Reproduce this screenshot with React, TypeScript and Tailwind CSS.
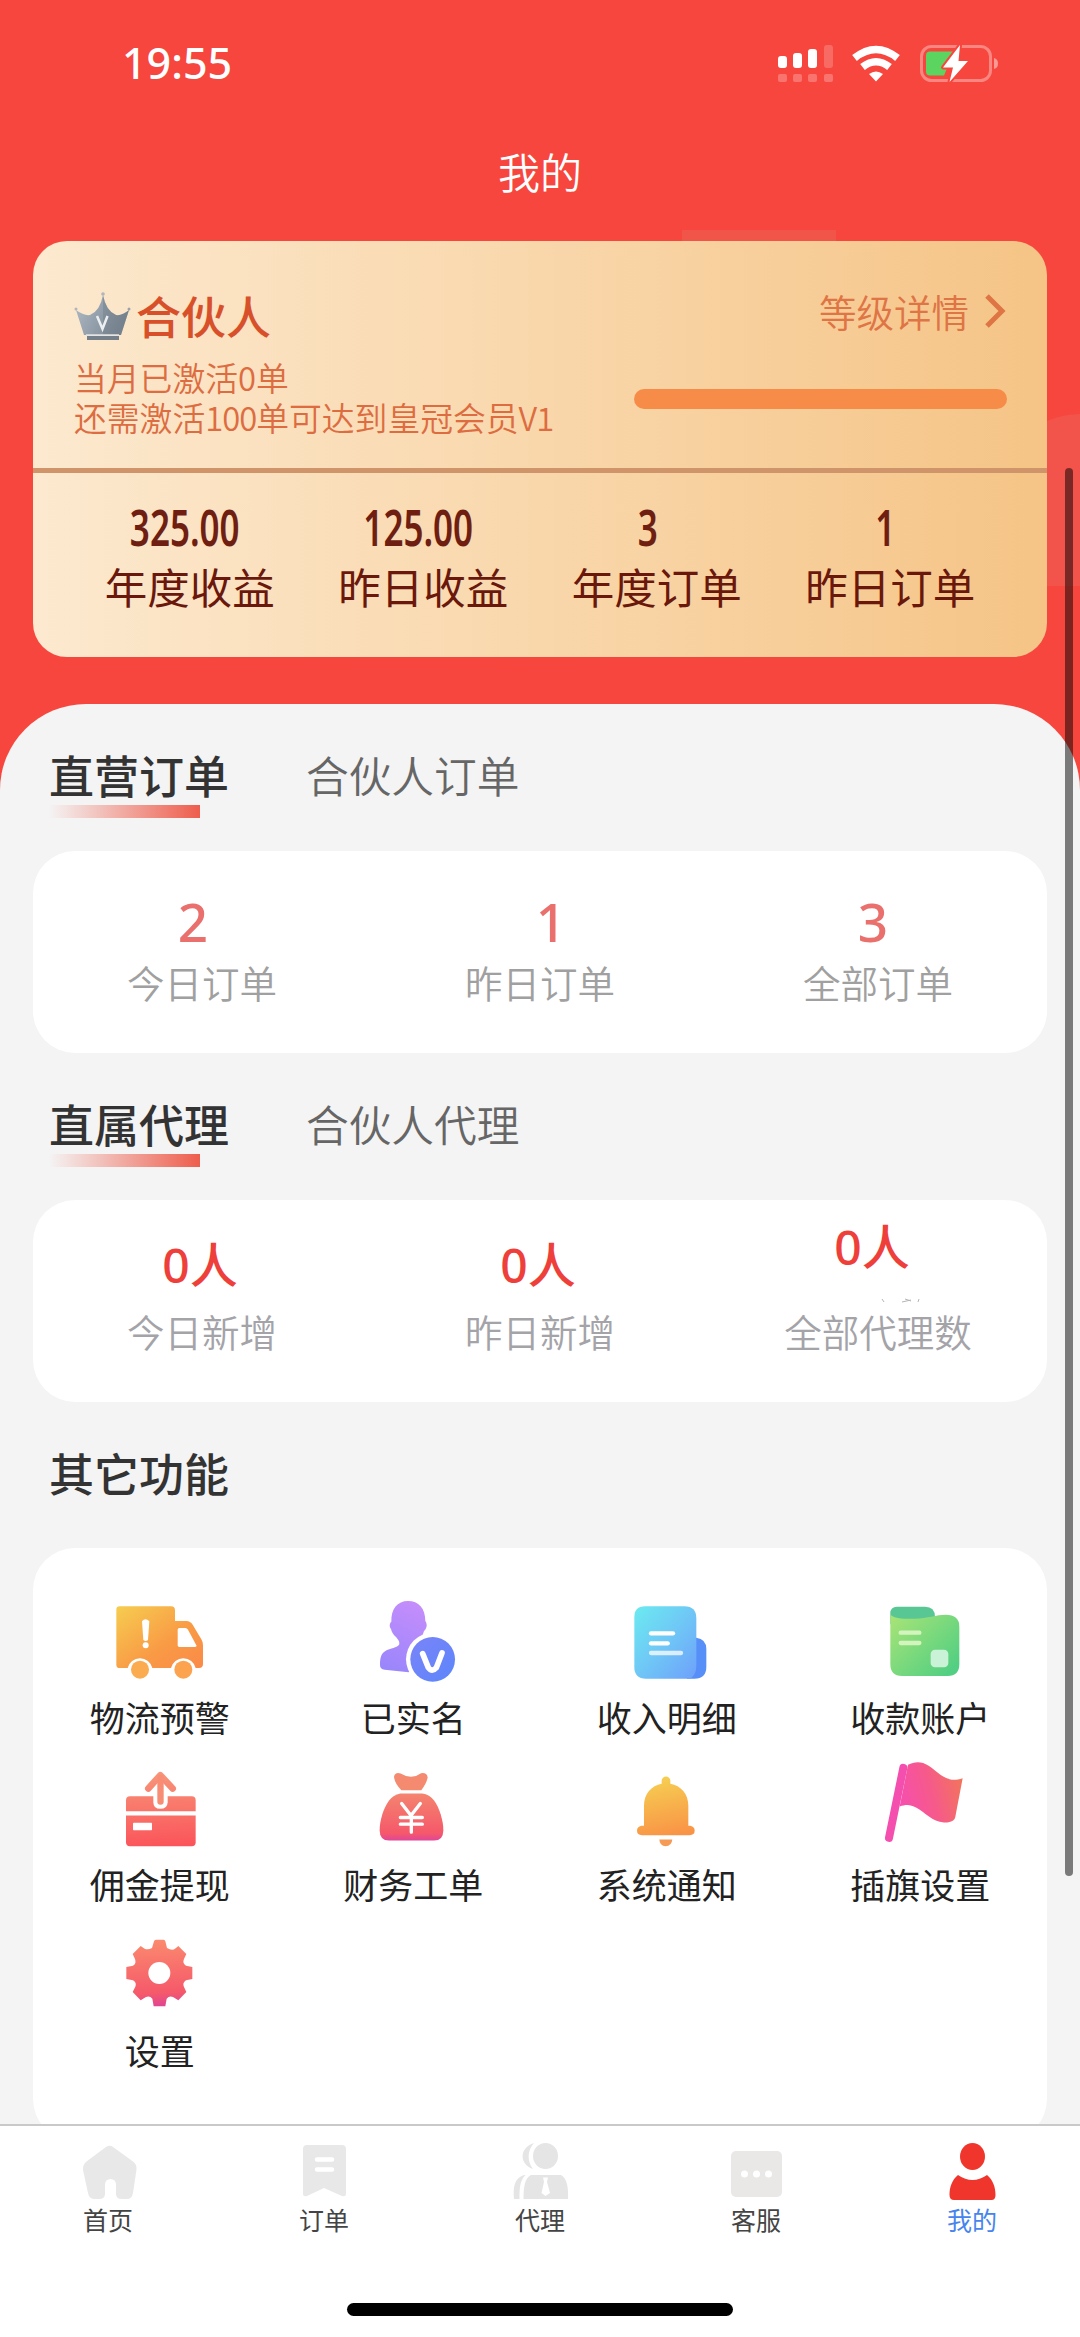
import type { ReactNode } from 'react'

const cardStats = [
  { value: '325.00', label: '年度收益', shift: 'pr-[10px]' },
  { value: '125.00', label: '昨日收益', shift: 'pr-[11px]' },
  { value: '3', label: '年度订单', shift: 'pr-[18px]' },
  { value: '1', label: '昨日订单', shift: 'pr-[11px]' },
]

const orderStats = [
  { value: '2', label: '今日订单', shift: 'pr-[18px]' },
  { value: '1', label: '昨日订单', shift: 'pl-[22px]' },
  { value: '3', label: '全部订单', shift: 'pr-[10px]' },
]

const agentStats = [
  { value: '0人', label: '今日新增', shift: 'pr-[4px] pt-[18px]' },
  { value: '0人', label: '昨日新增', shift: 'pr-[4px] pt-[18px]' },
  { value: '0人', label: '全部代理数', shift: 'pr-[12px]' },
]

const TruckIcon = () => (
  <svg viewBox="149 42 300 300" className="size-[100px]">
    <defs>
      <linearGradient id="truck" x1="0" y1="0" x2="1" y2="1">
        <stop offset="0" stopColor="#f6cd50" />
        <stop offset="0.6" stopColor="#f99a45" />
        <stop offset="1" stopColor="#fa8a48" />
      </linearGradient>
    </defs>
    <path
      d="M178 82h154q12 0 12 12v32h34q12 0 19 11l26 44q5 8 5 18v56q0 12-12 12h-10a38 38 0 0 0-74 0h-56a38 38 0 0 0-74 0h-24q-10 0-10-10V92q0-10 10-10z"
      fill="url(#truck)"
    />
    <path d="M357 147h18q5 0 8 5l25 47q2 5-4 5h-47q-5 0-5-5v-47q0-5 5-5z" fill="#fff" />
    <path d="M245 127q10-12 22 0l-4 56q-7 6-14 0z" fill="#fff" />
    <circle cx="256" cy="199" r="9" fill="#fff" />
    <circle cx="239" cy="272" r="27" fill="#fbab50" />
    <circle cx="369" cy="272" r="27" fill="#fba34e" />
  </svg>
)

const VerifiedIcon = () => (
  <svg viewBox="910 42 300 300" className="size-[100px]">
    <defs>
      <linearGradient id="person" x1="0.6" y1="0" x2="0.3" y2="1">
        <stop offset="0" stopColor="#c48dfb" />
        <stop offset="1" stopColor="#9a86fb" />
      </linearGradient>
      <linearGradient id="badge" x1="0" y1="0" x2="1" y2="1">
        <stop offset="0" stopColor="#7b83f8" />
        <stop offset="1" stopColor="#5d86fb" />
      </linearGradient>
    </defs>
    <path
      d="M1045 66c32 0 52 22 52 60 8 12 3 24-4 30-4 16-12 27-22 38v40l-24 46-72-8q-14-1-14-14c0-30 8-41 28-47 18-6 30-8 30-18 0-8-4-11-10-19-8-7-13-14-15-24-6-8-4-18 1-22-1-38 18-62 50-62z"
      fill="url(#person)"
    />
    <circle cx="1119" cy="241" r="80" fill="#fff" />
    <circle cx="1119" cy="241" r="67" fill="url(#badge)" />
    <path d="M1089 224l17 42q11 15 24 0l17-44" fill="none" stroke="#fff" strokeWidth="17" strokeLinecap="round" strokeLinejoin="round" />
  </svg>
)

const IncomeIcon = () => (
  <svg viewBox="170 42 300 300" className="size-[100px]">
    <defs>
      <linearGradient id="income" x1="0" y1="0" x2="1" y2="1">
        <stop offset="0" stopColor="#6bebf0" />
        <stop offset="0.5" stopColor="#6fc7f6" />
        <stop offset="1" stopColor="#6ea0fb" />
      </linearGradient>
    </defs>
    <path d="M380 176h28q30 4 30 34v53q0 36-36 36h-22z" fill="#578ff9" />
    <path d="M254 82h118q36 0 36 36v140q0 30-18 41H257q-35 0-35-35V114q0-32 32-32z" fill="url(#income)" />
    <g stroke="#fff" strokeWidth="13" strokeLinecap="round">
      <path d="M272 163h66" />
      <path d="M272 193h50" />
      <path d="M272 222h90" opacity="0.75" />
    </g>
  </svg>
)

const AccountIcon = () => (
  <svg viewBox="931 42 300 300" className="size-[100px]">
    <defs>
      <linearGradient id="account" x1="0" y1="0.1" x2="0.9" y2="0.9">
        <stop offset="0" stopColor="#a5e377" />
        <stop offset="1" stopColor="#52cf82" />
      </linearGradient>
    </defs>
    <path d="M1012 83h84q30 0 30 31l-10 22H992v-33q0-20 20-20z" fill="#59c793" />
    <path
      d="M992 107c12 12 44 13 74 12 38-1 64-12 92-12q41 0 41 36v113q0 35-35 35h-137q-35 0-35-35z"
      fill="url(#account)"
    />
    <g stroke="#d3f5bd" strokeWidth="13" strokeLinecap="round">
      <path d="M1023 161h56" />
      <path d="M1023 192h56" />
    </g>
    <rect x="1113" y="212" width="53" height="53" rx="13" fill="#c9f2d6" />
  </svg>
)

const WithdrawIcon = () => (
  <svg viewBox="149 541.5 300 300" className="size-[100px]">
    <defs>
      <linearGradient id="withdraw" gradientUnits="userSpaceOnUse" x1="300" y1="575" x2="310" y2="800">
        <stop offset="0" stopColor="#f7977a" />
        <stop offset="1" stopColor="#fb545a" />
      </linearGradient>
    </defs>
    <path d="M209 650h185q12 0 12 12v33H197v-33q0-12 12-12z" fill="url(#withdraw)" />
    <path d="M197 708h209v80q0 12-12 12H209q-12 0-12-12z" fill="url(#withdraw)" />
    <path d="M279 640v28q0 20 21 20t22-20v-28z" fill="#fff" />
    <path d="M264 627l36-40 37 40" fill="none" stroke="url(#withdraw)" strokeWidth="20" strokeLinecap="round" strokeLinejoin="round" />
    <rect x="291" y="585" width="19" height="91" rx="9" fill="#f88d75" />
    <rect x="218" y="730" width="57" height="22" rx="2" fill="#fff" />
  </svg>
)

const MoneyBagIcon = () => (
  <svg viewBox="910 541.5 300 300" className="size-[100px]">
    <defs>
      <linearGradient id="bag" x1="0" y1="0" x2="0" y2="1">
        <stop offset="0" stopColor="#f4846f" />
        <stop offset="0.85" stopColor="#f5586a" />
        <stop offset="1" stopColor="#e0459a" />
      </linearGradient>
    </defs>
    <path d="M1003 592q3-15 20-10 16 10 31 10t30-11q17-3 20 12-2 16-19 39h-60q-20-20-22-40z" fill="#f48b70" />
    <path d="M1022 642h66c30 4 44 30 55 62 6 20 8 34 8 48q0 31-28 31H988q-28 0-28-31c0-14 2-28 8-48 11-32 25-56 54-62z" fill="url(#bag)" />
    <path d="M1026 672l28 36 28-36M1055 708v50M1022 714h66M1022 734h66" fill="none" stroke="#fff" strokeWidth="10" strokeLinecap="round" />
  </svg>
)

const BellIcon = () => (
  <svg viewBox="170 541.5 300 300" className="size-[100px]">
    <defs>
      <linearGradient id="bell" x1="0.4" y1="0" x2="0.6" y2="1">
        <stop offset="0" stopColor="#f6cf52" />
        <stop offset="1" stopColor="#f99446" />
      </linearGradient>
    </defs>
    <path
      d="M304 602q3-11 13-11t13 11v11c32 6 54 30 54 66v60h6q13 3 13 14 0 14-15 14H245q-15 0-15-14 0-11 13-14h8v-60c0-36 22-60 53-66z"
      fill="url(#bell)"
    />
    <path d="M297 780h39q-2 20-20 20t-19-20z" fill="#f59b55" />
  </svg>
)

const FlagIcon = () => (
  <svg viewBox="931 541.5 300 300" className="size-[100px]">
    <defs>
      <linearGradient id="flag" x1="0" y1="0.6" x2="1" y2="0.35">
        <stop offset="0" stopColor="#f64fae" />
        <stop offset="0.5" stopColor="#f65a8a" />
        <stop offset="1" stopColor="#f2745c" />
      </linearGradient>
    </defs>
    <path d="M1031 565l-43 210" stroke="#f44fae" strokeWidth="24" strokeLinecap="round" />
    <path
      d="M1045 556c20-10 40-12 62 3 34 22 52 54 102 37l-22 116c-2 14-20 18-34 17-36-2-56-30-84-45-16-9-30-10-49-3z"
      fill="url(#flag)"
    />
  </svg>
)

const GearIcon = () => (
  <svg viewBox="329 81 300 300" className="size-[100px]">
    <defs>
      <linearGradient id="gear" gradientUnits="userSpaceOnUse" x1="470" y1="120" x2="480" y2="322">
        <stop offset="0" stopColor="#fb8b6e" />
        <stop offset="0.8" stopColor="#f5596a" />
        <stop offset="1" stopColor="#e04593" />
      </linearGradient>
    </defs>
    <path
      d="M462 122h28q4 0 5 5l5 20q16 9 24 2l10-8 24 24-7 15q-6 12 6 20l19 4v36l-19 4q-12 8-6 20l7 15-24 25-16-10q-12-4-19 5l-4 23h-35l-4-23q-7-9-19-5l-16 10-24-25 8-16q5-12-7-19l-20-4v-36l20-4q11-6 6-20l-7-15 24-24 12 8q10 4 22-2l6-20q1-5 6-5z"
      fill="url(#gear)"
    />
    <circle cx="477" cy="222" r="33" fill="#fff" />
  </svg>
)

const features: { label: string; icon: ReactNode }[] = [
  { label: '物流预警', icon: <TruckIcon /> },
  { label: '已实名', icon: <VerifiedIcon /> },
  { label: '收入明细', icon: <IncomeIcon /> },
  { label: '收款账户', icon: <AccountIcon /> },
  { label: '佣金提现', icon: <WithdrawIcon /> },
  { label: '财务工单', icon: <MoneyBagIcon /> },
  { label: '系统通知', icon: <BellIcon /> },
  { label: '插旗设置', icon: <FlagIcon /> },
  { label: '设置', icon: <GearIcon /> },
]

const tabs: { label: string; icon: ReactNode; active?: boolean }[] = [
  {
    label: '首页',
    icon: (
      <path d="M28 3q4-2.500 7 0l20 14.500q4 3 3.500 8L55 49q-1 6-6 6h-5q-6 0-6-5v-9q0-6-5.500-6T27 41v9q0 5-6 5h-4q-6 0-7-6L5 26q-.5-5.500 3.500-8.500z" fill="#e8e8e8" />
    ),
  },
  {
    label: '订单',
    icon: (
      <>
        <path d="M13 1h35q4 0 4 4v45q0 3-4 2L30 44 13 52q-4 1-4-2V5q0-4 4-4z" fill="#e8e8e8" />
        <path d="M23 15.500h15M23 25.500h15" stroke="#fff" strokeWidth="4.500" strokeLinecap="round" />
      </>
    ),
  },
  {
    label: '代理',
    icon: (
      <>
        <ellipse cx="35.500" cy="12" rx="12.500" ry="13" fill="#e5e5e5" />
        <path d="M24-1c-15 5-15 21-1 26-6-8-6-18 1-26z" fill="#e5e5e5" />
        <path d="M21 31h30c6 3 7.500 13 7 24H13.500c0-11 1-21 7.500-24z" fill="#e5e5e5" />
        <path d="M14 31c-10 3-11 13-10 24h5.500c0-10 0-18 6-24z" fill="#e5e5e5" />
        <path d="M33 33.500h5L37 38l3 11-4.500 3-4-3 2.500-11z" fill="#fff" />
      </>
    ),
  },
  {
    label: '客服',
    icon: (
      <>
        <rect x="5" y="7" width="51" height="46" rx="5" fill="#e9e8e7" />
        <circle cx="18.500" cy="30" r="3.500" fill="#fff" />
        <circle cx="30.500" cy="30" r="3.500" fill="#fff" />
        <circle cx="42.500" cy="30" r="3.500" fill="#fff" />
      </>
    ),
  },
  {
    label: '我的',
    active: true,
    icon: (
      <>
        <ellipse cx="30.500" cy="12.500" rx="12.500" ry="13.500" fill="#f0352c" />
        <path d="M16 31q14.500 10 29 0c6 5 8.500 12 8.500 20q0 5-4 5H12q-4.500 0-4.500-5c0-8 2.500-15 8.500-20z" fill="#f0352c" />
      </>
    ),
  },
]

const StatusBar = () => (
  <div className="flex h-[126px] items-start justify-between pl-[122px] pr-[80px] text-white">
    <span className="mt-[33px] text-[43px] leading-[60px] font-medium [font-family:'Noto_Sans',sans-serif]">19:55</span>
    <svg viewBox="776 40 224 46" className="mt-[40px] h-[46px] w-[224px]">
      <g fill="#fff">
        <rect x="778" y="56" width="9" height="12" rx="3" />
        <rect x="793" y="53" width="9" height="15" rx="3" />
        <rect x="808" y="49" width="9" height="19" rx="3" />
        <rect x="824" y="45" width="9" height="23" rx="3" opacity="0.2" />
        <g opacity="0.25">
          <rect x="778" y="74" width="9" height="8" rx="2" />
          <rect x="793" y="74" width="9" height="8" rx="2" />
          <rect x="808" y="74" width="9" height="8" rx="2" />
          <rect x="824" y="74" width="9" height="8" rx="2" />
        </g>
      </g>
      <path d="M854.500 58q21.500-17 43 0M862.500 67q13.500-10.500 27 0" fill="none" stroke="#fff" strokeWidth="7.500" />
      <path d="M869 74q7-5 14 0l-7 7.500z" fill="#fff" />
      <rect x="921.500" y="46.500" width="69" height="34" rx="10" fill="none" stroke="#fff" strokeOpacity="0.35" strokeWidth="3" />
      <path d="M994 58q4 1 4 5.500t-4 5.500z" fill="#fff" opacity="0.45" />
      <path d="M930 51.500h24l-10 24h-14q-4 0-4-4v-16q0-4 4-4z" fill="#5bd55f" />
      <path d="M960 45l-17 22.500h10L949.500 82 968 61h-9.500z" fill="#fff" stroke="#f7463e" strokeWidth="4" strokeLinejoin="round" paintOrder="stroke" />
    </svg>
  </div>
)

const CrownIcon = () => (
  <svg viewBox="76 288 58 50" className="h-[50px] w-[58px]">
    <defs>
      <linearGradient id="crown" x1="0" y1="0" x2="1" y2="0.4">
        <stop offset="0" stopColor="#b2bcc5" />
        <stop offset="0.5" stopColor="#95a1ad" />
        <stop offset="1" stopColor="#7c8894" />
      </linearGradient>
    </defs>
    <path d="M78 307q8 6 14 5 10-4 13-20 3 16 13 20 6 1 13-5l-8 25H86z" fill="url(#crown)" />
    <path d="M105 292q3 16 13 20 6 1 13-5l-8 25h-18z" fill="#6b7785" opacity="0.35" />
    <path d="M89 333h32v4H89z" fill="#747f8a" />
    <path d="M88 332h33" stroke="#dfe3e6" strokeWidth="1.500" />
    <circle cx="105" cy="291" r="1.800" fill="#b0b6bb" />
    <circle cx="78" cy="306" r="1.500" fill="#b0b6bb" />
    <circle cx="131" cy="306" r="1.500" fill="#9aa3ab" />
    <path d="M99 313l5.500 13 5-13" fill="none" stroke="#eceff1" strokeWidth="2.500" />
  </svg>
)

const MemberCard = () => (
  <section className="relative mx-[33px] flex h-[416px] flex-col overflow-hidden rounded-[34px] bg-gradient-to-r from-[#fce9cf] via-[#f9d7ab] to-[#f5c486]">
    <div className="flex h-[227px] justify-between pl-[41px] pr-[40px]">
      <div className="pt-[43px]">
        <div className="flex h-[64px] items-center">
          <CrownIcon />
          <h2 className="ml-[4px] text-[45px] leading-[62px] font-medium text-[#d8502a]">合伙人</h2>
        </div>
        <p className="mt-[9px] text-[32.800px] leading-[40px] font-[350] whitespace-nowrap text-[#dd6c40]">当月已激活0单</p>
        <p className="text-[32.800px] leading-[40px] font-[350] whitespace-nowrap text-[#dd6c40]">
          还需激活<span className="tracking-[-1px]">100</span>单可达到皇冠会员<span className="tracking-[-1px]">V1</span>
        </p>
      </div>
      <div className="flex flex-col items-end pt-[45px]">
        <button className="flex items-center text-[37.500px] leading-[50px] font-[350] text-[#df7445]">
          等级详情
          <svg viewBox="0 0 24 38" className="ml-[14px] h-[38px] w-[24px]">
            <path d="M4 4l15 15L4 34" fill="none" stroke="currentColor" strokeWidth="5" />
          </svg>
        </button>
        <div className="mt-[53px] h-[20px] w-[373px] rounded-full bg-[#f78c49]" />
      </div>
    </div>
    <div className="h-[5px] bg-[#d0946b]" />
    <div className="grid grow grid-cols-4 px-[40px] pt-[26px] text-center">
      {cardStats.map((stat) => (
        <div key={stat.label}>
          <div className={`${stat.shift} h-[57px]`}>
            <p className="scale-x-[0.7] text-[50px] leading-[57px] font-semibold text-[#6f1f12] [font-family:'Noto_Sans',sans-serif]">{stat.value}</p>
          </div>
          <p className="text-[42.500px] leading-[60px] text-[#6a170c]">{stat.label}</p>
        </div>
      ))}
    </div>
  </section>
)

const SectionTabs = ({ active, other }: { active: string; other?: string }) => (
  <div className="flex h-[147px] pl-[49px] pt-[41px]">
    <div className="w-[257px]">
      <h3 className="text-[45px] leading-[60px] font-medium text-[#333]">{active}</h3>
      {other && <div className="h-[13px] w-[151px] bg-gradient-to-r from-transparent to-[#ee5d4c]" />}
    </div>
    {other && <h3 className="text-[42.700px] leading-[58px] font-[350] text-[#666]">{other}</h3>}
  </div>
)

const App = () => {
  return (
    <div className="relative flex h-[2337px] w-[1080px] flex-col overflow-hidden bg-[#f7463e] [font-family:'Noto_Sans_CJK_SC',sans-serif]">
      {/* Faint header decoration */}
      <div className="absolute top-[230px] left-[682px] h-[14px] w-[154px] bg-[#f15449]" />
      <div className="absolute top-[414px] left-[1000px] h-[172px] w-[80px] rounded-tl-full bg-[#f2534a]" />

      <StatusBar />
      <header className="flex h-[115px] justify-center text-[42px] leading-[89px] font-[350] text-white">我的</header>
      <MemberCard />

      <main className="mt-[47px] h-[1420px] shrink-0 overflow-hidden rounded-t-[86px] bg-[#f4f4f4]">
        <SectionTabs active="直营订单" other="合伙人订单" />
        <section className="mx-[33px] grid h-[202px] grid-cols-3 rounded-[42px] bg-white pt-[35px] text-center">
          {orderStats.map((stat) => (
            <div key={stat.label}>
              <p className={`${stat.shift} h-[70px] text-[53px] leading-[72px] font-medium text-[#e9706c] [font-family:'Noto_Sans',sans-serif]`}>{stat.value}</p>
              <p className="text-[37.500px] leading-[52px] font-[350] text-[#a0a0a0]">{stat.label}</p>
            </div>
          ))}
        </section>

        <SectionTabs active="直属代理" other="合伙人代理" />
        <section className="relative mx-[33px] grid h-[202px] grid-cols-3 rounded-[42px] bg-white pt-[17px] text-center">
          {agentStats.map((stat) => (
            <div key={stat.label}>
              <p className={`${stat.shift} h-[88px] text-[48px] leading-[60px] font-medium text-[#ee3f3b] [font-family:'Noto_Sans','Noto_Sans_CJK_SC',sans-serif]`}>{stat.value}</p>
              <p className="text-[37.500px] leading-[52px] font-[350] text-[#a3a3a8]">{stat.label}</p>
            </div>
          ))}
          <svg viewBox="0 0 44 6" className="absolute top-[98px] left-[847px] h-[6px] w-[44px]">
            <path d="M2 1l2 3M22 4l9-2M25 1l6 2M39 1l-1 3" stroke="#b5b5b5" strokeWidth="1" />
          </svg>
        </section>

        <SectionTabs active="其它功能" />
        <section className="mx-[33px] -mt-px grid h-[593px] grid-cols-4 content-start rounded-[42px] bg-white pt-[45px]">
          {features.map((item) => (
            <button key={item.label} className="flex h-[166.5px] flex-col items-center">
              {item.icon}
              <span className="-mt-px text-[35px] leading-[50px] text-[#222]">{item.label}</span>
            </button>
          ))}
        </section>
      </main>

      <nav className="flex h-[213px] shrink-0 flex-col items-center border-t-2 border-[#c9c9c9] bg-white">
        <div className="grid w-full grid-cols-5">
          {tabs.map((tab) => (
            <button key={tab.label} className="flex flex-col items-center pt-[18px]">
              <svg viewBox="0 0 60 58" className="h-[58px] w-[60px] overflow-visible">
                {tab.icon}
              </svg>
              <span className={`text-[25px] leading-[35px] ${tab.active ? 'text-[#4784ee]' : 'text-[#444]'}`}>{tab.label}</span>
            </button>
          ))}
        </div>
        <div className="mt-[66px] h-[13px] w-[386px] rounded-full bg-black" />
      </nav>

      {/* Scroll thumb */}
      <div className="absolute top-[468px] left-[1065px] h-[1408px] w-[8px] rounded-full bg-black/50" />
    </div>
  )
}

export default App
